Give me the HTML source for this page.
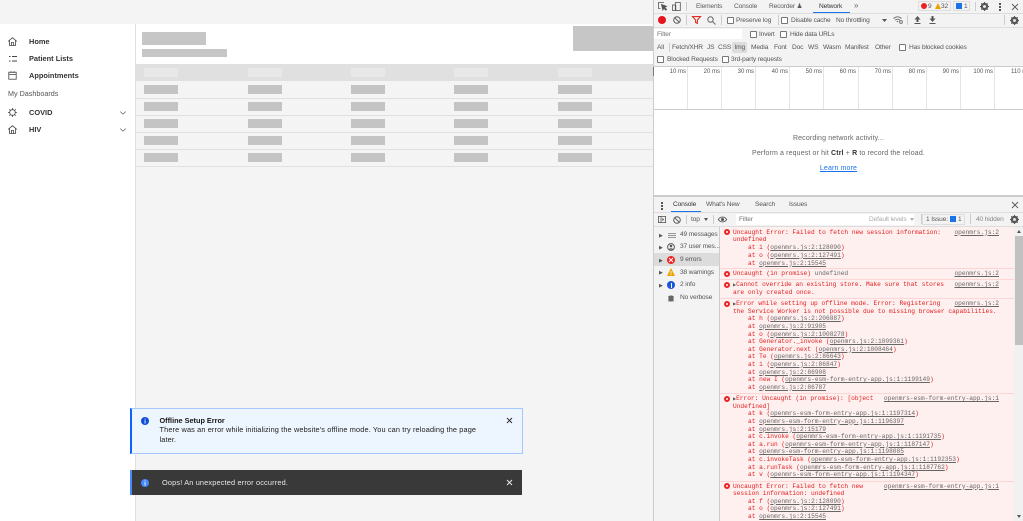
<!DOCTYPE html>
<html><head><meta charset="utf-8"><style>
html,body{margin:0;padding:0;width:1023px;height:521px;overflow:hidden;background:#f4f4f4;font-family:"Liberation Sans",sans-serif}
.b{position:absolute}
.t{position:absolute;white-space:nowrap;line-height:10px;height:10px;font-size:6.6px;letter-spacing:-.15px;color:#555}
.n{font-size:7.4px;color:#333;font-weight:bold;letter-spacing:0;left:29px}
.m{position:absolute;white-space:nowrap;line-height:8px;height:8px;font:6.2px/8px "Liberation Mono",monospace;color:#e11d1d;left:733px}
.i{left:748px}
.l{color:#666;text-decoration:underline}
.r{position:absolute;white-space:nowrap;font:6.2px/8px "Liberation Mono",monospace;height:8px;color:#666;text-decoration:underline;right:24px}
.e{position:absolute;left:724px;width:6px;height:6px;border-radius:50%;box-sizing:border-box;border:2px solid #e22;background:#fff}
.s{position:absolute;background:#c4c4c4;width:34px;height:9px}
.h{position:absolute;background:#e8e8e8;width:34px;height:9px;top:68px}
.ln{position:absolute;left:136px;width:517px;height:1px;background:#e0e0e0}
.cb{position:absolute;width:5px;height:5px;border:1px solid #777;border-radius:1px;background:#fff}
.tk{position:absolute;top:67px;width:1px;height:42px;background:#e4e4e4}
.ms{position:absolute;top:68px;font-size:6px;line-height:8px;color:#555;text-align:right;width:30px;white-space:nowrap}
.sp{position:absolute;left:720px;width:294px;height:1px;background:#fdd5d5}
svg{position:absolute;overflow:visible}
</style></head><body>
<!-- App -->
<div class="b" style="left:0;top:24px;width:135px;height:497px;background:#fff"></div>
<div class="b" style="left:135px;top:24px;width:1px;height:497px;background:#e0e0e0"></div>
<div class="b" style="left:136px;top:24px;width:517px;height:40px;background:#fff"></div>
<div class="b" style="left:142px;top:32px;width:64px;height:13px;background:#c6c6c6"></div>
<div class="b" style="left:142px;top:49px;width:85px;height:8px;background:#c6c6c6"></div>
<div class="b" style="left:573px;top:26px;width:80px;height:25px;background:#c6c6c6"></div>
<div class="b" style="left:136px;top:64px;width:517px;height:17px;background:#e0e0e0"></div>
<div class="ln" style="top:98px"></div><div class="ln" style="top:115px"></div><div class="ln" style="top:132px"></div><div class="ln" style="top:149px"></div><div class="ln" style="top:166px"></div>
<div class="h" style="left:144px"></div><div class="h" style="left:248px"></div><div class="h" style="left:351px"></div><div class="h" style="left:454px"></div><div class="h" style="left:558px"></div>
<div class="s" style="left:144px;top:85px"></div><div class="s" style="left:248px;top:85px"></div><div class="s" style="left:351px;top:85px"></div><div class="s" style="left:454px;top:85px"></div><div class="s" style="left:558px;top:85px"></div>
<div class="s" style="left:144px;top:102px"></div><div class="s" style="left:248px;top:102px"></div><div class="s" style="left:351px;top:102px"></div><div class="s" style="left:454px;top:102px"></div><div class="s" style="left:558px;top:102px"></div>
<div class="s" style="left:144px;top:119px"></div><div class="s" style="left:248px;top:119px"></div><div class="s" style="left:351px;top:119px"></div><div class="s" style="left:454px;top:119px"></div><div class="s" style="left:558px;top:119px"></div>
<div class="s" style="left:144px;top:136px"></div><div class="s" style="left:248px;top:136px"></div><div class="s" style="left:351px;top:136px"></div><div class="s" style="left:454px;top:136px"></div><div class="s" style="left:558px;top:136px"></div>
<div class="s" style="left:144px;top:153px"></div><div class="s" style="left:248px;top:153px"></div><div class="s" style="left:351px;top:153px"></div><div class="s" style="left:454px;top:153px"></div><div class="s" style="left:558px;top:153px"></div>

<svg style="left:8px;top:37px" width="9" height="9" viewBox="0 0 9 9" fill="none" stroke="#444" stroke-width=".8"><path d="M0 4.5L4.5 .7 9 4.5M1.5 3.5V8.5H7.5V3.5M3.5 8.5V5.5H5.5V8.5"/></svg>
<div class="t n" style="top:37px">Home</div>
<svg style="left:9px;top:55px" width="8" height="8" viewBox="0 0 8 8" fill="none" stroke="#444" stroke-width=".9"><path d="M0 1.5H1.5M3 1.5H8M0 6H1.5M3 6H8"/></svg>
<div class="t n" style="top:54px">Patient Lists</div>
<svg style="left:8px;top:71px" width="9" height="9" viewBox="0 0 9 9" fill="none" stroke="#444" stroke-width=".8"><rect x=".8" y="1.2" width="7.4" height="7"/><path d="M.8 3.5H8.2M3 .3V2M6 .3V2"/></svg>
<div class="t n" style="top:71px">Appointments</div>
<div class="t" style="left:8px;top:89px;font-size:7.2px;letter-spacing:0;color:#555">My Dashboards</div>
<svg style="left:8px;top:108px" width="9" height="9" viewBox="0 0 9 9" fill="none" stroke="#444" stroke-width=".8"><circle cx="4.5" cy="4.5" r="2.8"/><path d="M4.5 0V1.7M4.5 7.3V9M0 4.5H1.7M7.3 4.5H9M1.3 1.3L2.5 2.5M6.5 6.5L7.7 7.7M7.7 1.3L6.5 2.5M2.5 6.5L1.3 7.7"/></svg>
<div class="t n" style="top:108px">COVID</div>
<svg style="left:8px;top:125px" width="9" height="9" viewBox="0 0 9 9" fill="none" stroke="#444" stroke-width=".8"><path d="M0 4.5L4.5 .7 9 4.5M1.5 3.5V8.5H7.5V3.5M3.5 8.5V5.5H5.5V8.5"/></svg>
<div class="t n" style="top:125px">HIV</div>
<svg style="left:120px;top:111px" width="6" height="4" viewBox="0 0 6 4" fill="none" stroke="#555" stroke-width=".7"><path d="M.3 .6L3 3.2 5.7 .6"/></svg>
<svg style="left:120px;top:128px" width="6" height="4" viewBox="0 0 6 4" fill="none" stroke="#555" stroke-width=".7"><path d="M.3 .6L3 3.2 5.7 .6"/></svg>

<!-- Toasts -->
<div class="b" style="left:130px;top:408px;width:390px;height:44px;background:#edf5ff;border:1px solid #a6c8ff;border-left:2px solid #0f62fe"></div>
<svg style="left:141px;top:417px" width="8" height="8" viewBox="0 0 8 8"><circle cx="4" cy="4" r="4" fill="#0f4fd8"/><path d="M3.6 1.5h.9v1h-.9zM3.6 3.3h.9v3.2h-.9z" fill="#fff"/></svg>
<div class="t" style="left:159.5px;top:416px;font-size:7.3px;letter-spacing:0;font-weight:bold;color:#161616">Offline Setup Error</div>
<div class="t" style="left:159.5px;top:425px;font-size:7.35px;color:#222;letter-spacing:.13px">There was an error while initializing the website's offline mode. You can try reloading the page</div>
<div class="t" style="left:159.5px;top:435px;font-size:7.35px;color:#222;letter-spacing:.13px">later.</div>
<svg style="left:506.5px;top:418px" width="5" height="5" viewBox="0 0 5 5" stroke="#222" stroke-width=".9"><path d="M0 0L5 5M5 0L0 5"/></svg>
<div class="b" style="left:130px;top:470px;width:390px;height:25px;background:#393939;border-left:2px solid #4589ff"></div>
<svg style="left:141px;top:478.5px" width="8" height="8" viewBox="0 0 8 8"><circle cx="4" cy="4" r="4" fill="#4589ff"/><path d="M3.6 1.5h.9v1h-.9zM3.6 3.3h.9v3.2h-.9z" fill="#fff"/></svg>
<div class="t" style="left:162px;top:477.5px;font-size:7.35px;color:#e8e8e8;letter-spacing:.16px">Oops! An unexpected error occurred.</div>
<svg style="left:506.5px;top:480px" width="5" height="5" viewBox="0 0 5 5" stroke="#f4f4f4" stroke-width=".9"><path d="M0 0L5 5M5 0L0 5"/></svg>

<!-- DevTools -->
<div class="b" style="left:653px;top:0;width:370px;height:521px;background:#f3f3f3"></div>
<div class="b" style="left:653px;top:0;width:1px;height:521px;background:#ccc"></div>
<div class="b" style="left:654px;top:13px;width:369px;height:1px;background:#ddd"></div>
<div class="b" style="left:654px;top:27px;width:369px;height:1px;background:#ddd"></div>
<svg style="left:658px;top:2px" width="10" height="9" viewBox="0 0 10 9" fill="none" stroke="#555" stroke-width=".8"><path d="M6 .5H.5V6.5H2.5"/><path d="M3.5 2.5L4.8 8 6 6.3 7.8 8.2 8.6 7.4 6.8 5.6 8.5 4.3Z" fill="#555"/></svg>
<svg style="left:672px;top:2px" width="9" height="9" viewBox="0 0 9 9" fill="none" stroke="#555" stroke-width=".8"><rect x="3.3" y=".5" width="5" height="8"/><rect x=".5" y="3" width="3.3" height="5.5"/></svg>
<div class="b" style="left:686px;top:2px;width:1px;height:9px;background:#ccc"></div>
<div class="t" style="left:696px;top:1.5px;color:#5a5a5a">Elements</div>
<div class="t" style="left:734px;top:1.5px;color:#5a5a5a">Console</div>
<div class="t" style="left:769px;top:1.5px;color:#5a5a5a">Recorder ♟</div>
<div class="t" style="left:819px;top:1.5px;color:#333">Network</div>
<div class="b" style="left:813px;top:12px;width:37px;height:1px;background:#1a73e8"></div>
<div class="t" style="left:854px;top:1px;font-size:8px;color:#666">»</div>
<div class="b" style="left:918px;top:1px;width:33px;height:10px;border:1px solid #ddd;border-radius:1px;box-sizing:border-box"></div>
<div class="b" style="left:921px;top:3px;width:6px;height:6px;border-radius:50%;background:#e22"></div>
<div class="t" style="left:928px;top:1.5px">9</div>
<svg style="left:935px;top:3px" width="6" height="6" viewBox="0 0 6 6"><path d="M3 0L6 6H0Z" fill="#eaa400"/></svg>
<div class="t" style="left:941px;top:1.5px">32</div>
<div class="b" style="left:953px;top:1px;width:17px;height:10px;border:1px solid #ddd;box-sizing:border-box"></div>
<div class="b" style="left:956px;top:3px;width:6px;height:6px;background:#1a73e8"></div>
<div class="t" style="left:964px;top:1.5px">1</div>
<div class="b" style="left:975px;top:2px;width:1px;height:9px;background:#ccc"></div>
<svg style="left:980px;top:2px" width="9" height="9" viewBox="0 0 9 9"><circle cx="4.5" cy="4.5" r="2.8" fill="none" stroke="#555" stroke-width="2"/><path d="M4.5 0V9M0 4.5H9M1.3 1.3L7.7 7.7M7.7 1.3L1.3 7.7" stroke="#555" stroke-width="1"/><circle cx="4.5" cy="4.5" r="1.4" fill="#f3f3f3"/></svg>
<div class="b" style="left:999px;top:3px;width:1.5px;height:1.5px;background:#555;box-shadow:0 3px #555,0 6px #555"></div>
<svg style="left:1012px;top:3.5px" width="6" height="6" viewBox="0 0 6 6" stroke="#555" stroke-width=".9"><path d="M0 0L6 6M6 0L0 6"/></svg>

<div class="b" style="left:658px;top:16px;width:8px;height:8px;border-radius:50%;background:#e8141c"></div>
<svg style="left:673px;top:16px" width="8" height="8" viewBox="0 0 8 8" fill="none" stroke="#555" stroke-width="1"><circle cx="4" cy="4" r="3.3"/><path d="M1.7 1.7L6.3 6.3"/></svg>
<div class="b" style="left:686px;top:15px;width:1px;height:10px;background:#ccc"></div>
<svg style="left:692px;top:16px" width="9" height="8" viewBox="0 0 9 8" fill="none" stroke="#d93025" stroke-width="1.1"><path d="M.5 .6H8.5L5.4 4V7.4L3.6 6.5V4Z"/></svg>
<svg style="left:707px;top:16px" width="9" height="9" viewBox="0 0 9 9" fill="none" stroke="#666" stroke-width="1"><circle cx="3.5" cy="3.5" r="2.7"/><path d="M5.5 5.5L8.5 8.5"/></svg>
<div class="b" style="left:721px;top:15px;width:1px;height:10px;background:#ccc"></div>
<div class="cb" style="left:727px;top:17px"></div><div class="t" style="left:736px;top:15.5px">Preserve log</div>
<div class="b" style="left:778px;top:15px;width:1px;height:10px;background:#ccc"></div>
<div class="cb" style="left:781px;top:17px"></div><div class="t" style="left:791px;top:15.5px">Disable cache</div>
<div class="t" style="left:836px;top:15.5px">No throttling</div>
<svg style="left:882px;top:19px" width="5" height="3" viewBox="0 0 5 3"><path d="M0 0H5L2.5 3Z" fill="#555"/></svg>
<svg style="left:893px;top:16px" width="10" height="8" viewBox="0 0 10 8" fill="none" stroke="#666" stroke-width=".9"><path d="M.5 2.5C3 .3 6 .3 8.5 2.5M2 4.2C3.5 3 5.5 3 7 4.2M3.7 5.8C4.2 5.4 4.8 5.4 5.3 5.8"/><circle cx="8" cy="6" r="1.4"/></svg>
<div class="b" style="left:907px;top:15px;width:1px;height:10px;background:#ccc"></div>
<svg style="left:914px;top:16px" width="7" height="8" viewBox="0 0 7 8"><path d="M3.5 0L6.5 3.5H4.5V6H2.5V3.5H.5ZM.5 7H6.5V8H.5Z" fill="#555"/></svg>
<svg style="left:929px;top:16px" width="7" height="8" viewBox="0 0 7 8"><path d="M3.5 6L6.5 2.5H4.5V0H2.5V2.5H.5ZM.5 7H6.5V8H.5Z" fill="#555"/></svg>
<div class="b" style="left:1004px;top:15px;width:1px;height:10px;background:#ccc"></div>
<svg style="left:1010px;top:16px" width="9" height="9" viewBox="0 0 9 9"><circle cx="4.5" cy="4.5" r="2.8" fill="none" stroke="#555" stroke-width="2"/><path d="M4.5 0V9M0 4.5H9M1.3 1.3L7.7 7.7M7.7 1.3L1.3 7.7" stroke="#555" stroke-width="1"/><circle cx="4.5" cy="4.5" r="1.4" fill="#f3f3f3"/></svg>

<div class="b" style="left:654px;top:29px;width:88px;height:10px;background:#fff"></div>
<div class="t" style="left:657px;top:30px;color:#777">Filter</div>
<div class="cb" style="left:750px;top:31px"></div><div class="t" style="left:759px;top:30px">Invert</div>
<div class="cb" style="left:780px;top:31px"></div><div class="t" style="left:790px;top:30px">Hide data URLs</div>
<div class="t" style="left:657px;top:42.5px">All</div>
<div class="b" style="left:669px;top:43px;width:1px;height:9px;background:#ccc"></div>
<div class="t" style="left:672px;top:42.5px">Fetch/XHR</div>
<div class="t" style="left:707px;top:42.5px">JS</div>
<div class="t" style="left:718px;top:42.5px">CSS</div>
<div class="b" style="left:732px;top:42px;width:15px;height:11px;background:#ddd;border-radius:2px"></div>
<div class="t" style="left:734.5px;top:42.5px">Img</div>
<div class="t" style="left:751px;top:42.5px">Media</div>
<div class="t" style="left:774px;top:42.5px">Font</div>
<div class="t" style="left:792px;top:42.5px">Doc</div>
<div class="t" style="left:808px;top:42.5px">WS</div>
<div class="t" style="left:823px;top:42.5px">Wasm</div>
<div class="t" style="left:845px;top:42.5px">Manifest</div>
<div class="t" style="left:875px;top:42.5px">Other</div>
<div class="cb" style="left:899px;top:44px"></div><div class="t" style="left:909px;top:42.5px">Has blocked cookies</div>
<div class="cb" style="left:657px;top:56px"></div><div class="t" style="left:667px;top:55px">Blocked Requests</div>
<div class="cb" style="left:722px;top:56px"></div><div class="t" style="left:731px;top:55px">3rd-party requests</div>

<div class="b" style="left:654px;top:66px;width:369px;height:44px;background:#fff;border-top:1px solid #ccc;border-bottom:1px solid #ccc;box-sizing:border-box"></div>
<div class="b" style="left:653px;top:67px;width:1px;height:9px;background:#777"></div>
<div class="tk" style="left:687px"></div><div class="tk" style="left:721px"></div><div class="tk" style="left:755px"></div><div class="tk" style="left:789px"></div><div class="tk" style="left:823px"></div><div class="tk" style="left:858px"></div><div class="tk" style="left:892px"></div><div class="tk" style="left:926px"></div><div class="tk" style="left:960px"></div><div class="tk" style="left:994px"></div>
<div class="ms" style="left:656px">10 ms</div><div class="ms" style="left:690px">20 ms</div><div class="ms" style="left:724px">30 ms</div><div class="ms" style="left:758px">40 ms</div><div class="ms" style="left:792px">50 ms</div><div class="ms" style="left:826px">60 ms</div><div class="ms" style="left:861px">70 ms</div><div class="ms" style="left:895px">80 ms</div><div class="ms" style="left:929px">90 ms</div><div class="ms" style="left:963px">100 ms</div><div class="ms" style="left:1011px;text-align:left">110 ms</div>

<div class="b" style="left:654px;top:110px;width:369px;height:87px;background:#fff;border-bottom:2px solid #ccc;box-sizing:border-box"></div>
<div class="t" style="left:654px;width:369px;text-align:center;top:134px;font-size:7px;color:#666;letter-spacing:.14px">Recording network activity...</div>
<div class="t" style="left:654px;width:369px;text-align:center;top:149px;font-size:7px;color:#666;letter-spacing:.14px">Perform a request or hit <b style="color:#333">Ctrl</b> + <b style="color:#333">R</b> to record the reload.</div>
<div class="t" style="left:654px;width:369px;text-align:center;top:164px;font-size:7px;color:#1a73e8;text-decoration:underline;letter-spacing:.14px">Learn more</div>

<div class="b" style="left:661px;top:202px;width:1.5px;height:1.5px;background:#555;box-shadow:0 3px #555,0 6px #555"></div>
<div class="t" style="left:673px;top:200px;color:#333">Console</div>
<div class="b" style="left:671px;top:211px;width:30px;height:1px;background:#1a73e8"></div>
<div class="t" style="left:706px;top:200px">What's New</div>
<div class="t" style="left:755px;top:200px">Search</div>
<div class="t" style="left:789px;top:200px">Issues</div>
<svg style="left:1012px;top:202px" width="6" height="6" viewBox="0 0 6 6" stroke="#555" stroke-width=".9"><path d="M0 0L6 6M6 0L0 6"/></svg>
<div class="b" style="left:654px;top:212px;width:369px;height:1px;background:#ddd"></div>
<div class="b" style="left:654px;top:226px;width:369px;height:1px;background:#ddd"></div>
<svg style="left:658px;top:216px" width="8" height="7" viewBox="0 0 8 7" fill="none" stroke="#555" stroke-width=".8"><rect x=".4" y=".4" width="7.2" height="6.2"/><path d="M3 .4V6.6"/><path d="M4.3 2L6.3 3.5 4.3 5Z" fill="#555" stroke="none"/></svg>
<svg style="left:673px;top:215.5px" width="8" height="8" viewBox="0 0 8 8" fill="none" stroke="#555" stroke-width="1"><circle cx="4" cy="4" r="3.3"/><path d="M1.7 1.7L6.3 6.3"/></svg>
<div class="b" style="left:686px;top:215px;width:1px;height:9px;background:#ccc"></div>
<div class="t" style="left:691px;top:215px">top</div>
<svg style="left:704px;top:217.5px" width="4" height="3" viewBox="0 0 4 3"><path d="M0 0H4L2 3Z" fill="#555"/></svg>
<div class="b" style="left:713px;top:215px;width:1px;height:9px;background:#ccc"></div>
<svg style="left:718px;top:216px" width="9" height="7" viewBox="0 0 9 7"><path d="M.3 3.5C2.5 .3 6.5 .3 8.7 3.5 6.5 6.7 2.5 6.7 .3 3.5Z" fill="none" stroke="#555" stroke-width=".9"/><circle cx="4.5" cy="3.5" r="1.5" fill="#555"/></svg>
<div class="b" style="left:736px;top:214px;width:178px;height:11px;background:#fff"></div>
<div class="t" style="left:739px;top:215px;color:#777">Filter</div>
<div class="t" style="left:869px;top:214.5px;color:#aaa">Default levels</div>
<svg style="left:910px;top:217.5px" width="4" height="3" viewBox="0 0 4 3"><path d="M0 0H4L2 3Z" fill="#aaa"/></svg>
<div class="b" style="left:921px;top:214px;width:1px;height:10px;background:#ccc"></div>
<div class="b" style="left:922px;top:214px;width:43px;height:11px;border:1px solid #ddd;box-sizing:border-box"></div>
<div class="t" style="left:926px;top:214.5px">1 Issue:</div>
<div class="b" style="left:950px;top:216px;width:6px;height:6px;background:#1a73e8"></div>
<div class="t" style="left:958px;top:214.5px">1</div>
<div class="b" style="left:970px;top:214px;width:1px;height:10px;background:#ccc"></div>
<div class="t" style="left:976px;top:214.5px;color:#888">40 hidden</div>
<svg style="left:1010px;top:215px" width="9" height="9" viewBox="0 0 9 9"><circle cx="4.5" cy="4.5" r="2.8" fill="none" stroke="#555" stroke-width="2"/><path d="M4.5 0V9M0 4.5H9M1.3 1.3L7.7 7.7M7.7 1.3L1.3 7.7" stroke="#555" stroke-width="1"/><circle cx="4.5" cy="4.5" r="1.4" fill="#f3f3f3"/></svg>

<!-- Console sidebar -->
<div class="b" style="left:654px;top:253px;width:65px;height:13px;background:#dcdcdc"></div>
<div class="b" style="left:719px;top:227px;width:1px;height:294px;background:#ccc"></div>
<div class="t" style="left:659px;top:230.5px;font-size:5px;color:#555">▶</div><div class="t" style="left:659px;top:243px;font-size:5px;color:#555">▶</div><div class="t" style="left:659px;top:255.5px;font-size:5px;color:#555">▶</div><div class="t" style="left:659px;top:268px;font-size:5px;color:#555">▶</div><div class="t" style="left:659px;top:280.5px;font-size:5px;color:#555">▶</div>
<div class="b" style="left:668px;top:233px;width:8px;height:5px;background:repeating-linear-gradient(#999 0 1px,#eee 1px 2px)"></div>
<svg style="left:667px;top:243px" width="8" height="8" viewBox="0 0 8 8"><circle cx="4" cy="4" r="3.4" fill="none" stroke="#555" stroke-width="1"/><circle cx="4" cy="3" r="1.3" fill="#555"/><path d="M1.5 6.5C2.5 4.8 5.5 4.8 6.5 6.5Z" fill="#555"/></svg>
<div class="b" style="left:667px;top:256px;width:8px;height:8px;border-radius:50%;background:#e22"></div>
<svg style="left:669px;top:258px" width="4" height="4" viewBox="0 0 4 4" stroke="#fff" stroke-width=".9"><path d="M0 0L4 4M4 0L0 4"/></svg>
<svg style="left:667px;top:268px" width="8" height="8" viewBox="0 0 8 8"><path d="M4 0L8 8H0Z" fill="#eaa400"/><path d="M3.6 3H4.4V5.5H3.6ZM3.6 6H4.4V7H3.6Z" fill="#fff"/></svg>
<div class="b" style="left:667px;top:281px;width:8px;height:8px;border-radius:50%;background:#1a56d8"></div>
<div class="b" style="left:670.5px;top:282.5px;width:1px;height:5px;background:#fff"></div>
<svg style="left:668px;top:294px" width="6" height="8" viewBox="0 0 6 8"><rect x=".5" y="1.5" width="5" height="6" rx="2" fill="#666"/><path d="M0 2.5L1 3M6 2.5L5 3M0 5H1M6 5H5M0 7.5L1 6.8M6 7.5L5 6.8" stroke="#666" stroke-width=".6"/></svg>
<div class="t" style="left:680px;top:229.5px">49 messages</div>
<div class="t" style="left:680px;top:242px">37 user mes...</div>
<div class="t" style="left:680px;top:255px">9 errors</div>
<div class="t" style="left:680px;top:268px">38 warnings</div>
<div class="t" style="left:680px;top:280px">2 info</div>
<div class="t" style="left:680px;top:293px">No verbose</div>

<!-- Console messages -->
<div class="b" style="left:720px;top:227px;width:294px;height:294px;background:#fff0f0"></div>
<div class="b" style="left:1014px;top:227px;width:9px;height:294px;background:#f1f1f1"></div>
<div class="b" style="left:1015px;top:236px;width:8px;height:109px;background:#c1c1c1"></div>
<svg style="left:1017px;top:230px" width="4" height="3" viewBox="0 0 4 3"><path d="M0 3H4L2 0Z" fill="#555"/></svg>
<svg style="left:1017px;top:515px" width="4" height="3" viewBox="0 0 4 3"><path d="M0 0H4L2 3Z" fill="#555"/></svg>
<div class="sp" style="top:268px"></div><div class="sp" style="top:279px"></div><div class="sp" style="top:298px"></div><div class="sp" style="top:393px"></div><div class="sp" style="top:481px"></div>

<div class="e" style="top:229px"></div>
<div class="m" style="top:228.5px">Uncaught Error: Failed to fetch new session information:</div>
<div class="r" style="top:228.5px">openmrs.js:2</div>
<div class="m" style="top:236px">undefined</div>
<div class="m i" style="top:244px">at i (<span class="l">openmrs.js:2:128090</span>)</div>
<div class="m i" style="top:251.5px">at o (<span class="l">openmrs.js:2:127491</span>)</div>
<div class="m i" style="top:259.5px">at <span class="l">openmrs.js:2:15545</span></div>

<div class="e" style="top:270.5px"></div>
<div class="m" style="top:270px">Uncaught (in promise) <span style="color:#666">undefined</span></div>
<div class="r" style="top:270px">openmrs.js:2</div>

<div class="e" style="top:281.5px"></div>
<div class="m" style="top:281px"><span style="font-size:4px;color:#555">▶</span>Cannot override an existing store. Make sure that stores</div>
<div class="r" style="top:281px">openmrs.js:2</div>
<div class="m" style="top:288.5px">are only created once.</div>

<div class="e" style="top:300.5px"></div>
<div class="m" style="top:300px"><span style="font-size:4px;color:#555">▶</span>Error while setting up offline mode. Error: Registering</div>
<div class="r" style="top:300px">openmrs.js:2</div>
<div class="m" style="top:307.5px">the Service Worker is not possible due to missing browser capabilities.</div>
<div class="m i" style="top:315px">at h (<span class="l">openmrs.js:2:206887</span>)</div>
<div class="m i" style="top:322.5px">at <span class="l">openmrs.js:2:91905</span></div>
<div class="m i" style="top:330.5px">at o (<span class="l">openmrs.js:2:1008278</span>)</div>
<div class="m i" style="top:338px">at Generator._invoke (<span class="l">openmrs.js:2:1009361</span>)</div>
<div class="m i" style="top:345.5px">at Generator.next (<span class="l">openmrs.js:2:1008464</span>)</div>
<div class="m i" style="top:353px">at Te (<span class="l">openmrs.js:2:86643</span>)</div>
<div class="m i" style="top:360.5px">at i (<span class="l">openmrs.js:2:86847</span>)</div>
<div class="m i" style="top:368.5px">at <span class="l">openmrs.js:2:86908</span></div>
<div class="m i" style="top:376px">at new I (<span class="l">openmrs-esm-form-entry-app.js:1:1199149</span>)</div>
<div class="m i" style="top:383.5px">at <span class="l">openmrs.js:2:86787</span></div>

<div class="e" style="top:395.5px"></div>
<div class="m" style="top:395px"><span style="font-size:4px;color:#555">▶</span>Error: Uncaught (in promise): [object</div>
<div class="r" style="top:395px">openmrs-esm-form-entry-app.js:1</div>
<div class="m" style="top:402.5px">Undefined]</div>
<div class="m i" style="top:410px">at k (<span class="l">openmrs-esm-form-entry-app.js:1:1197314</span>)</div>
<div class="m i" style="top:417.5px">at <span class="l">openmrs-esm-form-entry-app.js:1:1196397</span></div>
<div class="m i" style="top:425.5px">at <span class="l">openmrs.js:2:15179</span></div>
<div class="m i" style="top:433px">at c.invoke (<span class="l">openmrs-esm-form-entry-app.js:1:1191735</span>)</div>
<div class="m i" style="top:440.5px">at a.run (<span class="l">openmrs-esm-form-entry-app.js:1:1187147</span>)</div>
<div class="m i" style="top:448px">at <span class="l">openmrs-esm-form-entry-app.js:1:1198085</span></div>
<div class="m i" style="top:456px">at c.invokeTask (<span class="l">openmrs-esm-form-entry-app.js:1:1192353</span>)</div>
<div class="m i" style="top:463.5px">at a.runTask (<span class="l">openmrs-esm-form-entry-app.js:1:1187762</span>)</div>
<div class="m i" style="top:471px">at v (<span class="l">openmrs-esm-form-entry-app.js:1:1194347</span>)</div>

<div class="e" style="top:483px"></div>
<div class="m" style="top:482.5px">Uncaught Error: Failed to fetch new</div>
<div class="r" style="top:482.5px">openmrs-esm-form-entry-app.js:1</div>
<div class="m" style="top:490px">session information: undefined</div>
<div class="m i" style="top:497.5px">at f (<span class="l">openmrs.js:2:128090</span>)</div>
<div class="m i" style="top:505px">at o (<span class="l">openmrs.js:2:127491</span>)</div>
<div class="m i" style="top:513px">at <span class="l">openmrs.js:2:15545</span></div>
</body></html>
